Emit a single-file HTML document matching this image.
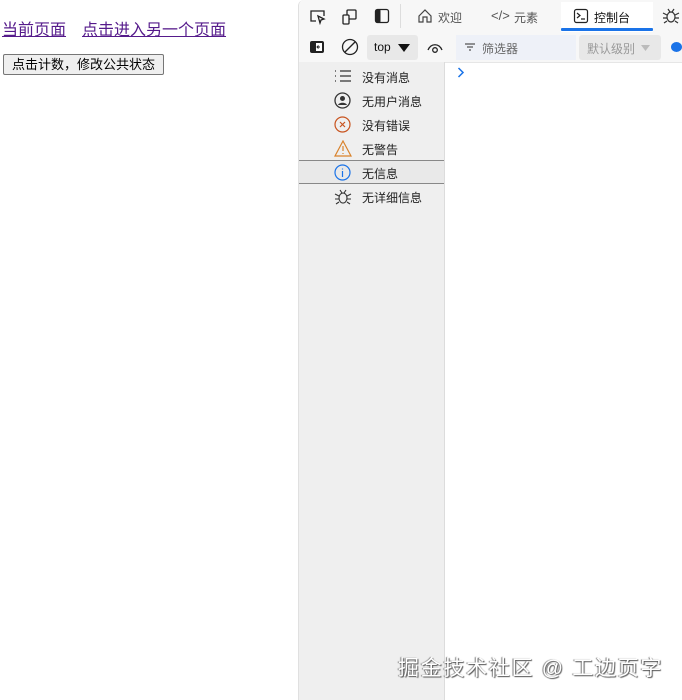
<!DOCTYPE html>
<html><head><meta charset="utf-8"><style>
*{margin:0;padding:0;box-sizing:border-box}
body{width:682px;height:700px;overflow:hidden;background:#fff;font-family:"Liberation Sans","Noto Sans CJK SC",sans-serif;position:relative}
.l{position:absolute;top:16px;font-size:16px;color:#551a8b;text-decoration:underline}
.btn{position:absolute;left:3px;top:54px;width:161px;height:21px;border:1px solid #767676;border-radius:2px;background:#efefef;font-size:13px;color:#000;text-align:center;line-height:19px}
.dt{position:absolute;left:298px;top:0;width:384px;height:700px;background:#fff;border-left:1px solid #e0e0e0;border-top-left-radius:6px;overflow:hidden}
.tb{position:absolute;left:0;top:0;width:384px;height:32px;background:#f7f7f7}
.tb2{position:absolute;left:0;top:32px;width:384px;height:31px;background:#f7f7f7;border-bottom:1px solid #e6e6e6}
.side{position:absolute;left:0;top:62px;width:146px;height:638px;background:#efefef;border-right:1px solid #dcdcdc}
.t{position:absolute;font-size:12px;color:#555;white-space:nowrap}
.row{position:absolute;left:0;width:145px;height:24px;font-size:12px;color:#222}
.row span{position:absolute;left:63px;top:5px}
.row svg{position:absolute;left:35px;top:4px}
.wm{position:absolute;left:398px;top:652px;font-size:21px;color:#fff;text-shadow:1px 1px 1px #555,-1px 0 1px #777;letter-spacing:1.7px;white-space:nowrap}
</style></head><body>
<a class="l" style="left:2px">当前页面</a>
<a class="l" style="left:82px">点击进入另一个页面</a>
<div class="btn">点击计数，修改公共状态</div>

<div class="dt">
 <div class="tb">
  <svg style="position:absolute;left:10px;top:9px" width="18" height="16" viewBox="0 0 18 16" fill="none" stroke="#222" stroke-width="1.3"><path d="M7 12H2V2h13v5"/><path d="M9 7l6 3-3 1-1 3z"/></svg>
  <svg style="position:absolute;left:42px;top:8px" width="18" height="18" viewBox="0 0 18 18" fill="none" stroke="#222" stroke-width="1.3"><rect x="6" y="2" width="9" height="9" rx="1"/><rect x="2" y="7" width="6" height="9" rx="1" fill="#f7f7f7"/></svg>
  <svg style="position:absolute;left:75px;top:8px" width="16" height="16" viewBox="0 0 16 16"><rect x="1.5" y="1.5" width="13" height="13" rx="2" fill="none" stroke="#222" stroke-width="1.3"/><rect x="1.5" y="1.5" width="5" height="13" rx="1" fill="#222"/></svg>
  <div style="position:absolute;left:101px;top:4px;width:1px;height:24px;background:#ddd"></div>
  <svg style="position:absolute;left:118px;top:8px" width="16" height="16" viewBox="0 0 16 16" fill="none" stroke="#444" stroke-width="1.2"><path d="M2 8L8 2l6 6v6H10V9H6v5H2z"/></svg>
  <div class="t" style="left:139px;top:9px">欢迎</div>
  <div class="t" style="left:192px;top:8px;font-size:13px">&lt;/&gt;</div>
  <div class="t" style="left:215px;top:9px">元素</div>
  <div style="position:absolute;left:262px;top:2px;width:92px;height:30px;background:#fff"></div>
  <svg style="position:absolute;left:274px;top:8px" width="16" height="16" viewBox="0 0 16 16" fill="none" stroke="#222" stroke-width="1.2"><rect x="1.5" y="1.5" width="13" height="13" rx="2"/><path d="M4 5l3 2.5L4 10M8 11h4"/></svg>
  <div class="t" style="left:295px;top:9px;color:#111">控制台</div>
  <div style="position:absolute;left:262px;top:28px;width:92px;height:3px;background:#1a73e8;border-radius:1px"></div>
  <svg style="position:absolute;left:363px;top:7px" width="18" height="18" viewBox="0 0 18 18" fill="none" stroke="#333" stroke-width="1.2"><ellipse cx="9" cy="10" rx="4" ry="5"/><path d="M1 6l4 2M17 6l-4 2M1 11h4M17 11h-4M2 16l3-2M16 16l-3-2M6 2l2 3M12 2l-2 3"/></svg>
 </div>
 <div class="tb2">
  <svg style="position:absolute;left:10px;top:8px" width="16" height="14" viewBox="0 0 16 14"><rect x="1" y="1" width="14" height="12" rx="2" fill="#222"/><rect x="7" y="3" width="6" height="8" fill="#fff"/><path d="M11 7H8M9.5 5.5L8 7l1.5 1.5" stroke="#222" fill="none"/></svg>
  <svg style="position:absolute;left:42px;top:6px" width="18" height="18" viewBox="0 0 18 18" fill="none" stroke="#222" stroke-width="1.3"><circle cx="9" cy="9" r="7.5"/><path d="M4 14L14 4"/></svg>
  <div style="position:absolute;left:68px;top:3px;width:51px;height:25px;background:#e8e8e8;border-radius:3px"></div>
  <div class="t" style="left:75px;top:8px;color:#111;font-size:12px">top</div>
  <svg style="position:absolute;left:99px;top:12px" width="12" height="9" viewBox="0 0 12 9"><path d="M0 0h12L6 8z" fill="#111"/></svg>
  <svg style="position:absolute;left:128px;top:10px" width="16" height="12" viewBox="0 0 16 12" fill="none" stroke="#222" stroke-width="1.3"><path d="M1 8C4 1 12 1 15 8"/><circle cx="8" cy="8" r="2.3"/></svg>
  <div style="position:absolute;left:157px;top:3px;width:120px;height:25px;background:#eef1f8"></div>
  <svg style="position:absolute;left:166px;top:11px" width="10" height="8" viewBox="0 0 10 8" stroke="#555" stroke-width="1.2"><path d="M0 1h10M2 4h6M4 7h2"/></svg>
  <div class="t" style="left:183px;top:8px;color:#666">筛选器</div>
  <div style="position:absolute;left:280px;top:3px;width:82px;height:25px;background:#e8e8e8;border-radius:3px"></div>
  <div class="t" style="left:288px;top:8px;color:#999">默认级别</div>
  <svg style="position:absolute;left:342px;top:13px" width="9" height="7" viewBox="0 0 9 7"><path d="M0 0h9L4.5 6z" fill="#bbb"/></svg>
  <div style="position:absolute;left:372px;top:10px;width:11px;height:10px;border-radius:50%;background:#1a73e8"></div>
 </div>
 <div class="side">
  <div class="row" style="top:2px"><svg width="18" height="16" viewBox="0 0 18 16" stroke="#333" stroke-width="1.2"><path d="M1 3h1M1 8h1M1 13h1M6 3h11M6 8h11M6 13h11"/></svg><span>没有消息</span></div>
  <div class="row" style="top:26px"><svg width="17" height="17" viewBox="0 0 17 17"><circle cx="8.5" cy="8.5" r="7.5" fill="none" stroke="#333" stroke-width="1.3"/><circle cx="8.5" cy="6.5" r="2.5" fill="#333"/><path d="M4 13c1-3 8-3 9 0z" fill="#333"/></svg><span>无用户消息</span></div>
  <div class="row" style="top:50px"><svg width="17" height="17" viewBox="0 0 17 17" fill="none" stroke="#c8531e" stroke-width="1.2"><circle cx="8.5" cy="8.5" r="7.5"/><path d="M6 6l5 5M11 6l-5 5"/></svg><span>没有错误</span></div>
  <div class="row" style="top:74px"><svg width="18" height="17" viewBox="0 0 18 17" fill="none" stroke="#d9822b" stroke-width="1.2"><path d="M9 1L17 16H1z"/><path d="M9 6v5M9 13v1"/></svg><span>无警告</span></div>
  <div class="row" style="top:98px;border-top:1px solid #888;border-bottom:1px solid #888;background:#e9e9e9"><svg width="17" height="17" viewBox="0 0 17 17" fill="none" stroke="#1a73e8" stroke-width="1.2" style="top:3px"><circle cx="8.5" cy="8.5" r="7.5"/><path d="M8.5 7v6M8.5 4.5v1"/></svg><span style="top:4px">无信息</span></div>
  <div class="row" style="top:122px"><svg width="18" height="18" viewBox="0 0 18 18" fill="none" stroke="#333" stroke-width="1.1"><ellipse cx="9" cy="10" rx="4" ry="5"/><path d="M1 6l4 2M17 6l-4 2M1 11h4M17 11h-4M2 16l3-2M16 16l-3-2M6 2l2 3M12 2l-2 3"/></svg><span>无详细信息</span></div>
 </div>
 <svg style="position:absolute;left:158px;top:67px" width="8" height="11" viewBox="0 0 8 11"><path d="M1.5 1l4.5 4.5L1.5 10" fill="none" stroke="#1a73e8" stroke-width="1.5"/></svg>
</div>
<div class="wm">掘金技术社区 @ 工边页字</div>
</body></html>
